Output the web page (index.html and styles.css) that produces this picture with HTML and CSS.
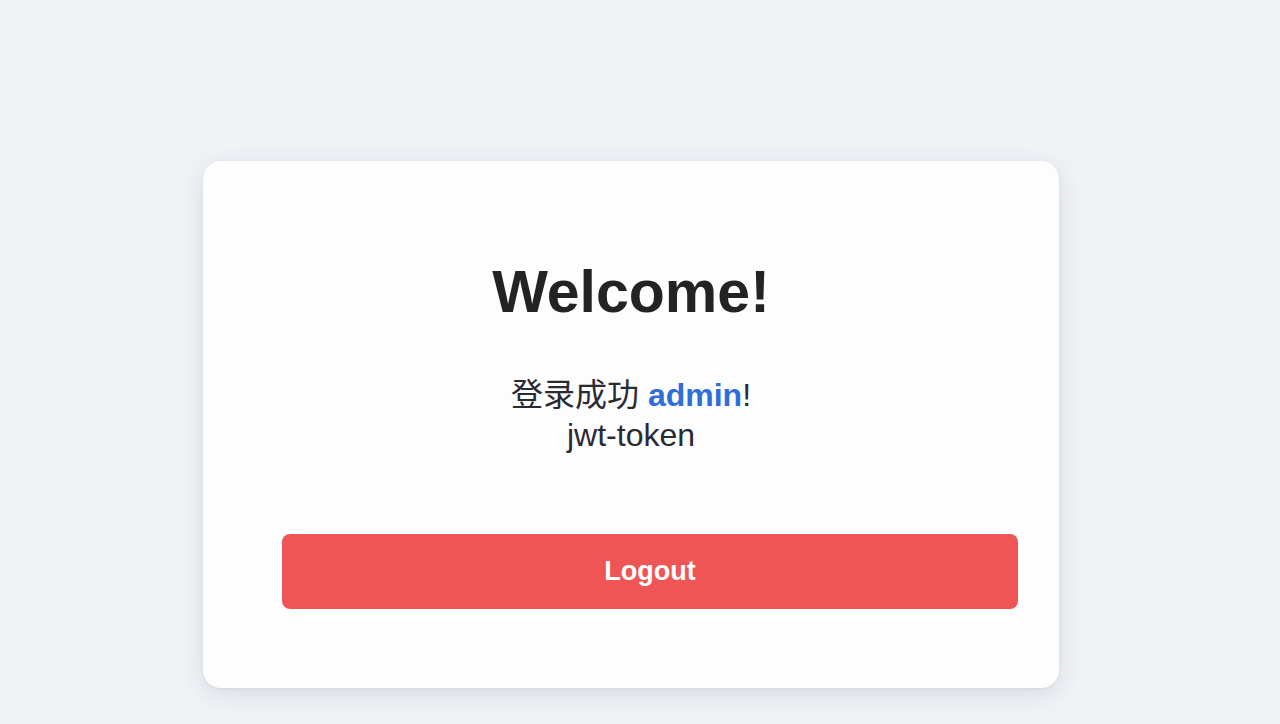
FILE: index.html
```html
<!DOCTYPE html>
<html lang="zh">
<head>
<meta charset="utf-8">
<title>Welcome</title>
<link rel="stylesheet" href="styles.css">
</head>
<body>
<main class="page">
  <section class="card">
    <h1 class="title">Welcome!</h1>
    <div class="info">
      <p class="line">登录成功 <strong class="user">admin</strong>!</p>
      <p class="line">jwt-token</p>
    </div>
    <button class="logout" type="button">Logout</button>
  </section>
</main>
</body>
</html>
```
FILE: styles.css
```css
* { box-sizing: border-box; }
html, body { margin: 0; padding: 0; }
body {
  background: #f0f2f6;
  font-family: "Liberation Sans", Arial, "Noto Sans CJK SC", sans-serif;
  width: 1280px;
  height: 724px;
  overflow: hidden;
}
.page {
  display: flex;
  justify-content: flex-start;
  padding-top: 161px;
  padding-left: 203px;
}
.card {
  width: 856px;
  height: 527px;
  background: #fdfdfe;
  border-radius: 18px;
  box-shadow: 0 6px 24px rgba(40, 50, 80, 0.12), 0 1px 3px rgba(40, 50, 80, 0.06);
  display: flex;
  flex-direction: column;
  align-items: center;
  padding-top: 98px;
}
.title {
  margin: 0;
  font-size: 59px;
  line-height: 66px;
  font-weight: 700;
  color: #232326;
}
.info {
  margin-top: 50px;
  text-align: center;
  color: #2a2a33;
}
.line {
  margin: 0;
  font-size: 32px;
  line-height: 40px;
}
.user {
  color: #2f6ddb;
  font-weight: 700;
}
.logout {
  margin-top: 79px;
  align-self: stretch;
  margin-left: 79px;
  margin-right: 41px;
  height: 75px;
  border: none;
  border-radius: 8px;
  background: #ef5555;
  color: #ffffff;
  font-family: "Liberation Sans", Arial, sans-serif;
  font-size: 27px;
  font-weight: 700;
  cursor: pointer;
}
```
